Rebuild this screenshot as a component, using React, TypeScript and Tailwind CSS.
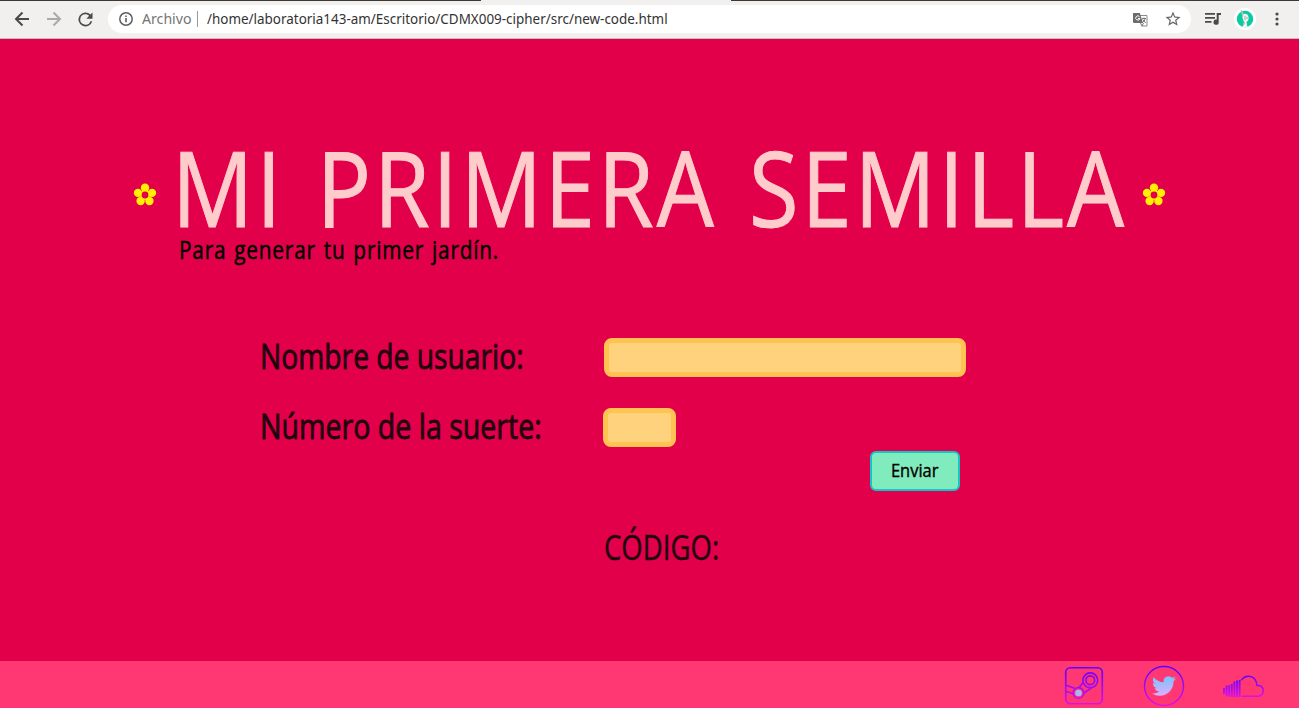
import React from "react";

function Flower() {
  return (
    <svg width="24" height="24" viewBox="0 0 24 24" className="shrink-0" fill="#fff000">
      <circle cx="12" cy="4.800" r="4.200" />
      <circle cx="19" cy="9.900" r="4.200" />
      <circle cx="16.400" cy="18" r="4.200" />
      <circle cx="7.600" cy="18" r="4.200" />
      <circle cx="5" cy="9.900" r="4.200" />
      <circle cx="12" cy="12" r="5" />
      <circle cx="12" cy="12" r="3.400" fill="#e2004b" />
    </svg>
  );
}

function Translate() {
  return (
    <svg width="15" height="15" viewBox="0 0 15 15" className="ml-auto shrink-0">
      <path d="M6 3.500h8v10.500H8.500" fill="none" stroke="#8a8a8a" />
      <path d="M0 1h6.800L10 11H1Q0 11 0 10z" fill="#6c6c6c" />
      <path d="M6.600 4.800A2.100 2.100 0 1 0 6.900 6.500H5" fill="none" stroke="#fff" />
      <path d="M9 6.500h4M11 5.500v1M12.300 6.500Q11.500 9.500 9.500 10.500M9.700 7.500l3 3.500M7.500 11l1.500 3 1.500-3" fill="none" stroke="#777" />
    </svg>
  );
}

function BrowserBar() {
  return (
    <header className="flex h-[39px] w-full shrink-0 flex-col border-b border-[#c4c0bd] bg-[#f2f0ee] font-['Noto_Sans',sans-serif]">
      <div className="flex h-px w-full shrink-0 justify-between">
        <span className="w-[481px] bg-[#3c3835]" />
        <span className="w-[568px] bg-[#3c3835]" />
      </div>
      <div className="flex h-[36px] items-center">
        <svg width="24" height="24" viewBox="0 0 24 24" className="ml-[10px] shrink-0" fill="none" stroke="#4a4a4a" strokeWidth="2">
          <path d="M19 12H6M12.500 5.500 6 12l6.500 6.500" />
        </svg>
        <svg width="24" height="24" viewBox="0 0 24 24" className="ml-2 shrink-0" fill="none" stroke="#aaa" strokeWidth="2">
          <path d="M5 12h13M11.500 5.500 18 12l-6.500 6.500" />
        </svg>
        <svg width="21" height="21" viewBox="0 0 24 24" className="ml-[9px] shrink-0" fill="#4a4a4a">
          <path d="M17.650 6.350A8 8 0 1 0 19.730 14h-2.080A6 6 0 1 1 12 6c1.660 0 3.140.69 4.220 1.780L13 11h7V4z" />
        </svg>
        <div className="ml-[12px] flex h-[28px] w-[1083px] shrink-0 items-center rounded-full bg-white text-[14px]">
          <svg width="14" height="14" viewBox="0 0 14 14" className="ml-[11px] shrink-0">
            <circle cx="7" cy="7" r="6.200" fill="none" stroke="#5f5f5f" strokeWidth="1.500" />
            <path d="M6.200 6h1.600v4.300H6.200zM6.200 3.500h1.600V5H6.200z" fill="#5f5f5f" />
          </svg>
          <span className="-mt-[2px] ml-[9px] flex w-[55px] shrink-0">
            <span className="origin-left scale-x-[1.01] whitespace-nowrap text-[#757575]">Archivo</span>
          </span>
          <span className="h-[16px] w-px bg-[#999]" />
          <span className="-mt-[2px] ml-[9px] w-[470px] origin-left scale-x-[.96] whitespace-nowrap text-[#333]">/home/laboratoria143-am/Escritorio/CDMX009-cipher/src/new-code.html</span>
          <Translate />
          <svg width="18" height="18" viewBox="0 0 24 24" className="mr-[9px] ml-[16px] shrink-0" fill="#666">
            <path d="m22 9.240-7.190-.62L12 2 9.190 8.630 2 9.240l5.460 4.730L5.820 21 12 17.270 18.180 21l-1.630-7.030zM12 15.400l-3.760 2.270 1-4.280-3.320-2.880 4.380-.38L12 6.100l1.710 4.040 4.380.38-3.320 2.880 1 4.280z" />
          </svg>
        </div>
        <svg width="18" height="14" viewBox="0 0 18 14" className="ml-[14px] shrink-0" fill="#4a4a4a">
          <path d="M0 1h10v1.700H0zM0 5h10v1.700H0zM0 9h6.500v1.700H0zM11.700 1H16v2h-2.300v7.200a2.600 2.600 0 1 1-2-2.500z" />
        </svg>
        <svg width="22" height="22" viewBox="0 0 22 22" className="ml-[11px] shrink-0">
          <circle cx="11" cy="11" r="11" fill="#fff" />
          <circle cx="11" cy="11" r="8.200" fill="#08cba1" />
          <path d="M7 1.500 9.500 6q4-1 5 3 .8 3-2 5l1 5.500H8.500L10 14 8.500 10z" fill="#f1f1f1" />
          <path d="m7 2 2 5-1 2M11 8v4M9.500 17l1-3M13 9v2" fill="none" stroke="#9c9c9c" strokeWidth=".8" />
        </svg>
        <svg width="4" height="14" viewBox="0 0 4 14" className="ml-[19px] shrink-0" fill="#4a4a4a">
          <circle cx="2" cy="2" r="1.600" />
          <circle cx="2" cy="7" r="1.600" />
          <circle cx="2" cy="12" r="1.600" />
        </svg>
      </div>
    </header>
  );
}

function Footer() {
  return (
    <footer className="flex h-[47px] shrink-0 items-start bg-[#ff3874] pl-[1064px]">
      <svg width="40" height="40" viewBox="0 0 40 40" className="mt-[4px] shrink-0" fill="none" stroke="url(#steam)" strokeWidth="1.700">
        <defs>
          <linearGradient id="steam" gradientUnits="userSpaceOnUse" x1="0" y1="0" x2="0" y2="40">
            <stop stopColor="#5a00ff" />
            <stop offset="1" stopColor="#e010e8" />
          </linearGradient>
        </defs>
        <rect x="1.750" y="2.750" width="36.500" height="36" rx="4.500" />
        <circle cx="26.300" cy="15.300" r="7.400" />
        <circle cx="26.300" cy="15.300" r="4.400" />
        <path d="m19.300 17.500-4.500 5.200M27.500 22.700l-7.700 5.500M2 20.300l8.500 2.900M2 26.200l7 2.500" />
        <circle cx="14.500" cy="28" r="5.300" />
        <circle cx="14.500" cy="28" r="3.300" fill="#a5b8ef" stroke="none" />
      </svg>
      <svg width="42" height="42" viewBox="0 0 42 42" className="mt-[4px] ml-[39px] shrink-0">
        <circle cx="21" cy="21" r="19.500" fill="none" stroke="url(#steam)" strokeWidth="1.500" />
        <path transform="translate(9 9)" fill="url(#bird)" d="M23.950 4.570a10 10 0 0 1-2.820.77 4.960 4.960 0 0 0 2.160-2.720c-.95.56-2 .96-3.130 1.180a4.920 4.920 0 0 0-8.380 4.480C7.690 8.090 4.070 6.130 1.640 3.160a4.820 4.820 0 0 0-.67 2.480c0 1.710.87 3.210 2.190 4.100a4.900 4.900 0 0 1-2.230-.62v.06a4.920 4.920 0 0 0 3.950 4.830 5 5 0 0 1-2.210.08 4.940 4.940 0 0 0 4.600 3.420A9.870 9.870 0 0 1 0 19.540a14 14 0 0 0 7.550 2.210c9.050 0 14-7.500 14-13.980 0-.21 0-.42-.02-.63a9.900 9.900 0 0 0 2.420-2.570z" />
        <defs>
          <linearGradient id="bird" gradientUnits="userSpaceOnUse" x1="0" y1="1" x2="0" y2="23">
            <stop stopColor="#6dc7ff" />
            <stop offset="1" stopColor="#e6abff" />
          </linearGradient>
        </defs>
      </svg>
      <svg width="44" height="24" viewBox="0 0 44 24" className="mt-[13px] ml-[37px] shrink-0" fill="none" stroke="url(#cloud)" strokeWidth="1.500">
        <defs>
          <linearGradient id="cloud" gradientUnits="userSpaceOnUse" x1="0" y1="2" x2="0" y2="23">
            <stop stopColor="#5a00ff" />
            <stop offset="1" stopColor="#e010e8" />
          </linearGradient>
        </defs>
        <path d="M19.500 22.200H37a5.500 5.500 0 0 0 0-10.700h-2C34.500 5.500 31 2.200 26.700 2.200c-3 0-5.500 1.200-7.500 4" />
        <path strokeWidth="1.900" d="M2 14v6M4.600 11.500v11M7.200 11.200v11.500M9.800 10v13M12.400 7.500v15.500M15 6.500v16.500M17.600 6v17" />
      </svg>
    </footer>
  );
}

export default function App() {
  return (
    <div className="flex h-[708px] w-[1299px] flex-col overflow-hidden bg-[#e2004b] font-['Open_Sans',sans-serif] text-black">
      <BrowserBar />
      <main className="flex grow flex-col">
        <div className="mt-[96px] flex h-[120px] items-center pl-[133px]">
          <Flower />
          <h1 className="-mt-[16px] ml-[15px] flex h-[90px] w-[970px] items-center">
            <span className="origin-left scale-x-[.86] text-[105px] leading-[84px] tracking-[3.400px] whitespace-nowrap text-[#ffcccc] [-webkit-text-stroke:1px_#ffcccc] [word-spacing:7px]">MI PRIMERA SEMILLA</span>
          </h1>
          <Flower />
        </div>
        <p className="-mt-[23px] flex h-[34px] items-center pl-[179px]">
          <span className="origin-left scale-x-[.83] text-[25px] leading-none tracking-[1px] whitespace-nowrap [-webkit-text-stroke:.5px_#000] [word-spacing:2px]">Para generar tu primer jardín.</span>
        </p>
        <form className="mt-[72px] flex flex-col pl-[259px] text-[#21000e]">
          <div className="flex h-[39px] items-center">
            <label className="-mt-[4px] flex w-[345px] shrink-0 items-center pl-px">
              <span className="origin-left scale-x-[.83] text-[34px] leading-none whitespace-nowrap [-webkit-text-stroke:.8px_#21000e]">Nombre de usuario:</span>
            </label>
            <input type="text" className="h-[39px] w-[362px] rounded-lg border-[5px] border-[#ffc352] bg-[#ffd37d] outline-none" />
          </div>
          <div className="mt-[31px] flex h-[39px] items-center">
            <label className="-mt-[4px] flex w-[344px] shrink-0 items-center pl-px">
              <span className="origin-left scale-x-[.84] text-[34px] leading-none whitespace-nowrap [-webkit-text-stroke:.8px_#21000e]">Número de la suerte:</span>
            </label>
            <input type="text" className="h-[39px] w-[73px] rounded-lg border-[5px] border-[#ffc352] bg-[#ffd37d] outline-none" />
          </div>
          <button type="button" className="mt-[4px] ml-[611px] flex h-[40px] w-[90px] items-center justify-center rounded-md border-2 border-[#12c5c8] bg-[#80ebbc] pb-[2px] text-black">
            <span className="scale-x-[.89] text-[18.500px] leading-none [-webkit-text-stroke:.4px_#000]">Enviar</span>
          </button>
          <output className="mt-[36px] ml-[345px] flex h-[40px] items-center">
            <span className="origin-left scale-x-[.81] text-[34px] leading-none whitespace-nowrap [-webkit-text-stroke:.4px_#21000e]">CÓDIGO:</span>
          </output>
        </form>
      </main>
      <Footer />
    </div>
  );
}
